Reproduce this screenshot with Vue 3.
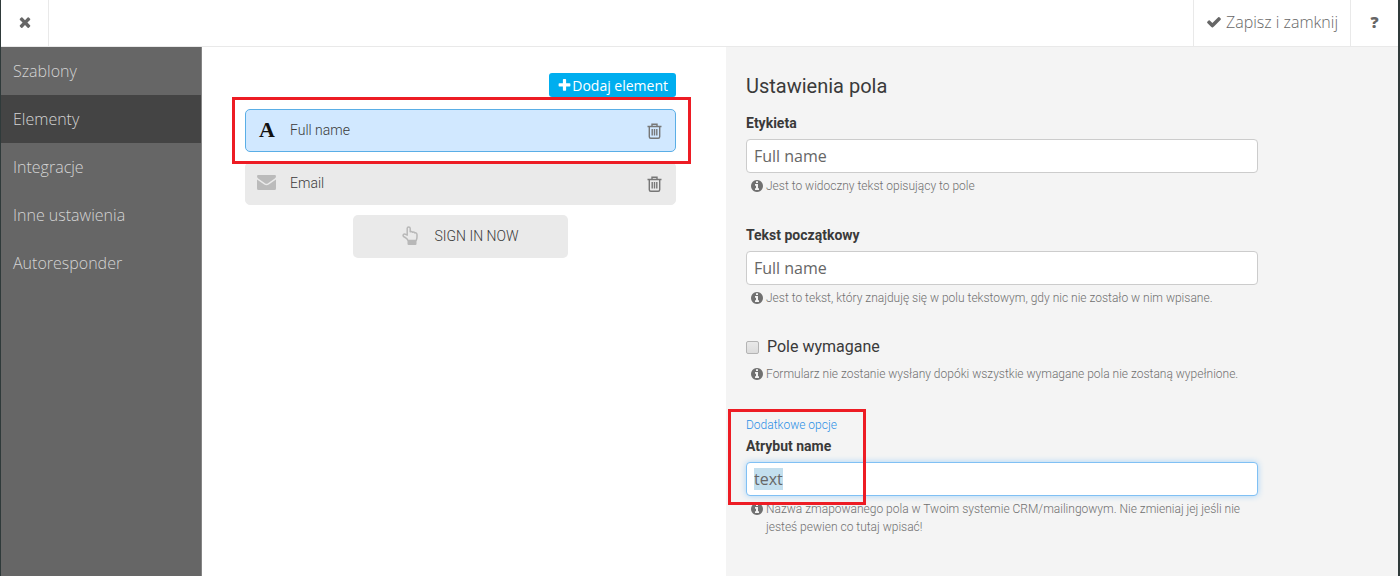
<script setup>
import { ref, onMounted } from 'vue'

const menu = ['Szablony', 'Elementy', 'Integracje', 'Inne ustawienia', 'Autoresponder']
const active = ref('Elementy')

const label = ref('Full name')
const initialText = ref('Full name')
const required = ref(false)
const attributeName = ref('text')
const attributeInput = ref(null)

const trashPath =
  'M.5 3.500h14M5 3.500V1.200h5v2.300M2.300 3.500v10.200q0 1.500 1.500 1.500h7.400q1.500 0 1.500-1.500V3.500M5.200 6v6.500M7.500 6v6.500M9.800 6v6.500'
const infoPath =
  'M1152 1376v-160q0-14-9-23t-23-9h-96v-512q0-14-9-23t-23-9h-320q-14 0-23 9t-9 23v160q0 14 9 23t23 9h96v320h-96q-14 0-23 9t-9 23v160q0 14 9 23t23 9h448q14 0 23-9t9-23zm-128-896v-160q0-14-9-23t-23-9h-192q-14 0-23 9t-9 23v160q0 14 9 23t23 9h192q14 0 23-9t9-23zm640 416q0 209-103 385.5t-279.5 279.5-385.5 103-385.5-103-279.5-279.5-103-385.5 103-385.5 279.5-279.5 385.5-103 385.5 103 279.5 279.5 103 385.5z'

onMounted(() => {
  attributeInput.value.focus()
  attributeInput.value.select()
})
</script>

<template>
  <div class="app">
    <header class="topbar">
      <button class="top-btn close" type="button" aria-label="Zamknij">
        <svg width="16" height="16" viewBox="0 0 1792 1792"><path d="M1490 1322q0 40-28 68l-136 136q-28 28-68 28t-68-28l-294-294-294 294q-28 28-68 28t-68-28l-136-136q-28-28-28-68t28-68l294-294-294-294q-28-28-28-68t28-68l136-136q28-28 68-28t68 28l294 294 294-294q28-28 68-28t68 28l136 136q28 28 28 68t-28 68l-294 294 294 294q28 28 28 68z" /></svg>
      </button>
      <div class="top-actions">
        <button class="top-btn save" type="button">
          <svg width="16" height="16" viewBox="0 0 1792 1792"><path d="M1671 566q0 40-28 68l-724 724-136 136q-28 28-68 28t-68-28l-136-136-362-362q-28-28-28-68t28-68l136-136q28-28 68-28t68 28l294 295 656-657q28-28 68-28t68 28l136 136q28 28 28 68z" /></svg>
          <span>Zapisz i zamknij</span>
        </button>
        <button class="top-btn help" type="button">?</button>
      </div>
    </header>

    <div class="body">
      <nav class="sidebar">
        <a
          v-for="item in menu"
          :key="item"
          href="#"
          :class="{ active: item === active }"
          @click.prevent="active = item"
        >{{ item }}</a>
      </nav>

      <main class="elements">
        <button class="add" type="button">
          <svg width="15" height="15" viewBox="0 0 1792 1792"><path d="M1600 736v192q0 40-28 68t-68 28h-416v416q0 40-28 68t-68 28h-192q-40 0-68-28t-28-68v-416h-416q-40 0-68-28t-28-68v-192q0-40 28-68t68-28h416v-416q0-40 28-68t68-28h192q40 0 68 28t28 68v416h416q40 0 68 28t28 68z" /></svg>
          <span>Dodaj element</span>
        </button>

        <div class="row selected">
          <span class="row-icon letter">A</span>
          <span class="row-name">Full name</span>
          <button class="trash" type="button" aria-label="Usuń Full name">
            <svg width="15" height="16" viewBox="0 0 15 16"><path :d="trashPath" /></svg>
          </button>
          <span class="marker row-marker"></span>
        </div>

        <div class="row">
          <span class="row-icon">
            <svg width="19" height="15" viewBox="0 0 19 15"><path fill="#bbb" d="M0 1.200Q0 0 1.200 0h16.600Q19 0 19 1.200q0 1.300-1.200 2.200L11 8.200q-1.500 1-3 0L1.200 3.400Q0 2.500 0 1.200zM0 4.500l7.200 5.100q2.300 1.500 4.600 0L19 4.500v9q0 1.500-1.500 1.500h-16Q0 15 0 13.500z" /></svg>
          </span>
          <span class="row-name">Email</span>
          <button class="trash" type="button" aria-label="Usuń Email">
            <svg width="15" height="16" viewBox="0 0 15 16"><path :d="trashPath" /></svg>
          </button>
        </div>

        <button class="signin" type="button">
          <svg width="16" height="19" viewBox="0 0 16 19">
            <path fill="none" stroke="#b8b8b8" stroke-width="1.500" stroke-linejoin="round" d="M6 14.500Q5.200 12.500 3.200 11.500Q.9 10.500 1 9.200Q1.500 7.800 3.200 8.200L5.200 9.200V2.300Q5.300.9 6.700.9Q8.100.9 8.200 2.300V5.800Q9.600 5.100 10.600 6.300Q12 5.700 12.800 6.900Q15 6.600 15 8.800V10.800Q15 12.500 14.200 14.500z" />
            <path fill="#b8b8b8" d="M5.500 14.500h9v3.500q0 1-1 1h-7q-1 0-1-1z" />
          </svg>
          <span>SIGN IN NOW</span>
        </button>
      </main>

      <section class="settings">
        <h2>Ustawienia pola</h2>

        <div class="field">
          <label class="caption" for="label">Etykieta</label>
          <input id="label" v-model="label" class="text" type="text" />
          <p class="hint">
            <svg width="14" height="14" viewBox="0 0 1792 1792"><path :d="infoPath" /></svg>
            <span>Jest to widoczny tekst opisujący to pole</span>
          </p>
        </div>

        <div class="field">
          <label class="caption" for="initial">Tekst początkowy</label>
          <input id="initial" v-model="initialText" class="text" type="text" />
          <p class="hint">
            <svg width="14" height="14" viewBox="0 0 1792 1792"><path :d="infoPath" /></svg>
            <span>Jest to tekst, który znajduję się w polu tekstowym, gdy nic nie zostało w nim wpisane.</span>
          </p>
        </div>

        <div class="field">
          <label class="check">
            <input v-model="required" type="checkbox" />
            <span>Pole wymagane</span>
          </label>
          <p class="hint check-hint">
            <svg width="14" height="14" viewBox="0 0 1792 1792"><path :d="infoPath" /></svg>
            <span>Formularz nie zostanie wysłany dopóki wszystkie wymagane pola nie zostaną wypełnione.</span>
          </p>
        </div>

        <div class="field extra">
          <a class="more" href="#" @click.prevent>Dodatkowe opcje</a>
          <label class="caption" for="attribute">Atrybut name</label>
          <input id="attribute" ref="attributeInput" v-model="attributeName" class="text" type="text" />
          <p class="hint">
            <svg width="14" height="14" viewBox="0 0 1792 1792"><path :d="infoPath" /></svg>
            <span>Nazwa zmapowanego pola w Twoim systemie CRM/mailingowym. Nie zmieniaj jej jeśli nie jesteś pewien co tutaj wpisać!</span>
          </p>
          <span class="marker field-marker"></span>
        </div>
      </section>
    </div>
  </div>
</template>

<style>
body {
  background: #2f3a3a;
}
</style>

<style scoped>
.app {
  min-height: 100vh;
  box-sizing: border-box;
  padding: 0 2px 0 1px;
  display: flex;
  flex-direction: column;
  font-family: Roboto, "Liberation Sans", sans-serif;
  font-size: 14px;
  color: #3a3a3a;
}
button {
  border: 0;
  margin: 0;
  padding: 0;
  background: none;
  font: inherit;
  color: inherit;
  cursor: pointer;
}
svg {
  flex: none;
  display: block;
  fill: currentColor;
}
.topbar {
  display: flex;
  justify-content: space-between;
  height: 46px;
  background: #fff;
  border-bottom: 1px solid #e9e9e9;
  color: #666;
}
.top-actions {
  display: flex;
}
.top-btn {
  display: flex;
  align-items: center;
  justify-content: center;
  width: 48px;
  padding-bottom: 2px;
  border-left: 1px solid #e9e9e9;
}
.close {
  border-left: 0;
  border-right: 1px solid #e9e9e9;
}
.save {
  width: auto;
  padding: 0 12px 2px;
  gap: 4px;
  font-family: "Open Sans", "Noto Sans", sans-serif;
  font-size: 16px;
  font-weight: 300;
}
.help {
  font-family: "Open Sans", "Noto Sans", sans-serif;
  font-size: 16px;
  font-weight: 800;
}
.body {
  flex: 1;
  display: grid;
  grid-template-columns: 200px 25fr 32fr;
}
.sidebar {
  background: #666;
  border-right: 1px solid #858585;
  margin-right: -1px;
  font-family: "Open Sans", "Noto Sans", sans-serif;
  font-size: 16px;
  font-weight: 300;
  z-index: 1;
}
.sidebar a {
  display: block;
  padding: 0 12px;
  line-height: 48px;
  color: #d4d4d4;
  text-decoration: none;
}
.sidebar a.active {
  background: #444;
}
.elements {
  background: #fff;
  padding: 26px 50px 26px 44px;
  display: flex;
  flex-direction: column;
}
.add {
  align-self: flex-end;
  display: flex;
  align-items: center;
  height: 24px;
  margin-bottom: 12px;
  padding: 0 8px;
  border-radius: 3px;
  background: #00aeef;
  color: #fff;
  font-family: "Open Sans", "Noto Sans", sans-serif;
  font-size: 14px;
}
.row {
  position: relative;
  display: flex;
  align-items: center;
  box-sizing: border-box;
  height: 43px;
  margin-bottom: 10px;
  padding: 0 13px 0 11px;
  border: 1px solid #eaeaea;
  border-radius: 5px;
  background: #eaeaea;
  font-weight: 300;
}
.row.selected {
  z-index: 1;
  border-color: #5aaee6;
  background: #d1e8ff;
}
.row-icon {
  width: 33px;
  padding-bottom: 2px;
}
.letter {
  font-family: "Liberation Serif", serif;
  font-size: 22px;
  font-weight: 700;
  color: #111;
  padding-left: 2px;
  box-sizing: border-box;
}
.row-name {
  flex: 1;
  line-height: 20px;
  padding-bottom: 2px;
}
.trash {
  color: #777;
}
.trash svg {
  fill: none;
  stroke: currentColor;
  stroke-width: 1.4;
}
.marker {
  position: absolute;
  border: 3px solid #ed1c24;
  pointer-events: none;
}
.row-marker {
  inset: -13px -16px -13px -14px;
}
.signin {
  align-self: center;
  display: flex;
  align-items: center;
  justify-content: center;
  gap: 16px;
  width: 50%;
  height: 43px;
  padding-bottom: 2px;
  border-radius: 5px;
  background: #eaeaea;
  font-weight: 300;
}
.settings {
  background: #f4f4f4;
  padding: 27px 140px 27px 20px;
}
h2 {
  margin: 0 0 15px;
  font-size: 20px;
  line-height: 24px;
  font-weight: 400;
}
.field {
  position: relative;
  margin-bottom: 30px;
}
.extra {
  margin-top: 32px;
}
.caption {
  display: block;
  margin-bottom: 6px;
  line-height: 20px;
  font-weight: 700;
}
.text {
  display: block;
  box-sizing: border-box;
  width: 100%;
  height: 34px;
  padding: 0 7px;
  border: 1px solid #ccc;
  border-radius: 4px;
  background: #fff;
  outline: 0;
  color: #666;
  font-family: "Open Sans", "Noto Sans", sans-serif;
  font-size: 16px;
}
.text:focus {
  border-color: #80c0f4;
  box-shadow: 0 0 6px #a6d3f8;
}
.text::selection {
  background: #c3dfee;
  color: #666;
}
.hint {
  display: flex;
  align-items: flex-start;
  gap: 2px;
  margin: 4px 0 0 4px;
  line-height: 18px;
  font-size: 12px;
  font-weight: 300;
  color: #707070;
}
.hint svg {
  margin-top: 2px;
}
.check {
  display: flex;
  align-items: center;
  gap: 8px;
  line-height: 20px;
  font-size: 16px;
}
.check input {
  appearance: none;
  box-sizing: border-box;
  width: 13px;
  height: 13px;
  margin: 0;
  border: 1px solid #b4b4b4;
  border-radius: 2px;
  background: linear-gradient(#e9e9e9, #dcdcdc);
}
.check input:checked {
  background: #5aaee6;
}
.check-hint {
  margin-top: 8px;
}
.more {
  display: block;
  width: max-content;
  margin-bottom: 1px;
  line-height: 20px;
  font-size: 12px;
  font-weight: 300;
  color: #2a8fe6;
  text-decoration: none;
}
.field-marker {
  top: -6px;
  left: -18px;
  width: 132px;
  height: 90px;
}
</style>
